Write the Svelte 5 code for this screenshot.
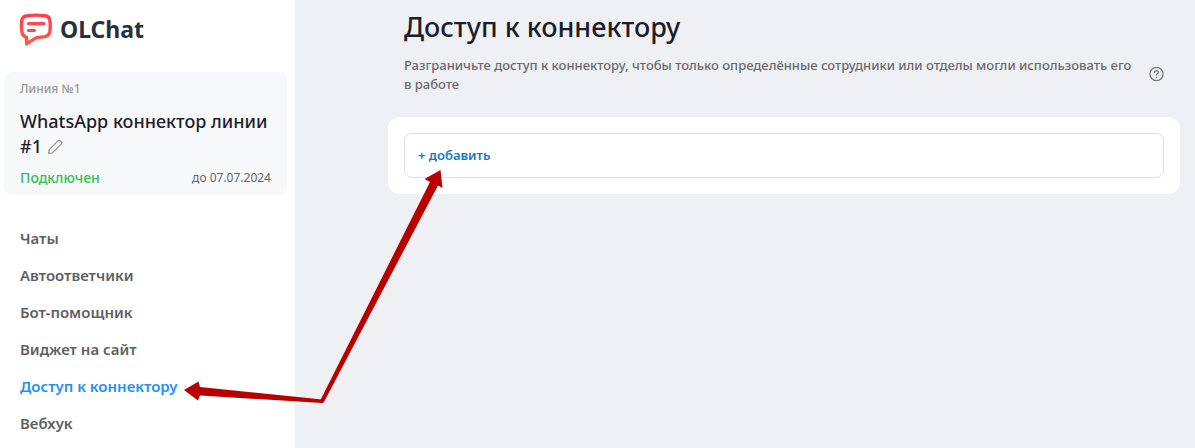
<script>
  const items = [
    'Чаты',
    'Автоответчики',
    'Бот-помощник',
    'Виджет на сайт',
    'Доступ к коннектору',
    'Вебхук'
  ];
  let active = $state('Доступ к коннектору');
</script>

<div class="app">
  <aside>
    <a class="brand" href="#home">
      <svg width="34" height="34" viewBox="0 0 34 34" fill="none" aria-hidden="true">
        <defs>
          <linearGradient id="brand-fill" x1="0" y1="0" x2="0" y2="1">
            <stop offset="0" stop-color="#ff3d4f" />
            <stop offset="1" stop-color="#ff5a46" />
          </linearGradient>
        </defs>
        <path
          d="M8.500 3.700Q17 2.500 26 3.700Q30.200 4.200 30.800 8Q31.700 13.800 30.800 20Q30.200 23.800 26 24.600L17.500 25.600L7.600 31.800V25.300Q3.400 24 2.900 20Q2 13.800 2.900 8Q3.600 4.200 8.500 3.700Z"
          stroke="url(#brand-fill)"
          stroke-width="3.400"
          stroke-linejoin="round"
        />
        <path d="M9.500 11.700H25M9.500 18.500H15.500" stroke="#ff4a4b" stroke-width="3.200" stroke-linecap="round" />
      </svg>
      <span>OLChat</span>
    </a>

    <section class="line">
      <div class="number">Линия №1</div>
      <h2>
        WhatsApp коннектор линии #1
        <button class="icon edit" aria-label="Изменить">
          <svg width="16" height="16" viewBox="0 0 16 16" fill="none" stroke="#999" stroke-width="1.3" stroke-linejoin="round">
            <path d="M1.500 14.500L2.200 10.600L10.900 1.900Q12.300.8 13.800 2.200Q15.200 3.700 14.100 5.100L5.400 13.800Z" />
          </svg>
        </button>
      </h2>
      <div class="status">
        <span class="on">Подключен</span>
        <span class="until">до 07.07.2024</span>
      </div>
    </section>

    <nav>
      {#each items as item}
        <a href="#section" class:active={item === active} onclick={() => (active = item)}>{item}</a>
      {/each}
    </nav>
  </aside>

  <main>
    <header>
      <h1>Доступ к коннектору</h1>
      <div class="intro">
        <p>
          Разграничьте доступ к коннектору, чтобы только определённые сотрудники или отделы могли использовать его в работе
        </p>
        <button class="icon" aria-label="Справка">
          <svg width="16" height="16" viewBox="0 0 16 16" fill="none" stroke="#777" stroke-width="1.3" stroke-linecap="round">
            <circle cx="8.500" cy="7" r="6.600" />
            <path d="M6.500 5.300Q6.700 3.600 8.500 3.600Q10.500 3.700 10.500 5.300Q10.400 6.300 9.300 6.800Q8.500 7.200 8.500 8.100" />
            <path d="M8.500 10.300V10.400" stroke-width="1.500" />
          </svg>
        </button>
      </div>
    </header>
    <section class="card">
      <div class="field">
        <button class="add">+ добавить</button>
      </div>
    </section>
  </main>

  <svg class="pointer" width="1195" height="448" viewBox="0 0 1195 448" fill="#b80000" aria-hidden="true">
    <path d="M184 390L198.500 381.500L200 387L322 399.500L324 402.500L322 403L200 395.500L198 400.500Z" />
    <path d="M440.500 170L442.500 188L438 185.500L324.500 401L322 403L320.500 400L430 182L424.500 179Z" />
  </svg>
</div>

<style>
  :global(body) {
    margin: 0;
    background: #eff0f4;
  }
  .app {
    position: relative;
    display: flex;
    min-height: 100vh;
    overflow: hidden;
    font-family: 'Noto Sans', sans-serif;
    color: #1d1d2b;
  }
  aside {
    box-sizing: border-box;
    flex: 0 0 295px;
    padding: 12px 8px 0 4px;
    background: #fff;
  }
  a {
    text-decoration: none;
  }
  button {
    border: 0;
    padding: 0;
    background: none;
    font: inherit;
    cursor: pointer;
  }
  .icon {
    display: inline-flex;
  }
  .brand {
    display: flex;
    align-items: center;
    gap: 7px;
    padding-left: 15px;
    height: 34px;
    color: #24323d;
    font-size: 23px;
    line-height: 30px;
    font-weight: 700;
  }
  .line {
    margin-top: 26px;
    padding: 8px 16px 7px;
    border-radius: 8px;
    background: #f7f8fa;
  }
  .number {
    color: #999;
    font-size: 12px;
    line-height: 18px;
    font-weight: 500;
  }
  h2 {
    margin: 11px 0 0;
    font-size: 18px;
    line-height: 25px;
    font-weight: 500;
  }
  .edit {
    vertical-align: -2px;
  }
  .status {
    display: flex;
    justify-content: space-between;
    align-items: center;
    margin-top: 9px;
    line-height: 20px;
  }
  .on {
    color: #34bd5c;
    font-size: 14px;
    font-weight: 500;
  }
  .until {
    color: #666;
    font-size: 12px;
  }
  nav {
    display: flex;
    flex-direction: column;
    margin-top: 25px;
  }
  nav a {
    padding: 0 16px;
    color: #5f5f5f;
    font-size: 15px;
    line-height: 37px;
    font-weight: 600;
  }
  nav .active {
    color: #2490f5;
  }
  main {
    flex: 1;
    min-width: 0;
    padding: 8px 15px 0 93px;
  }
  header {
    padding: 0 16px;
  }
  h1 {
    margin: 0;
    font-size: 27px;
    line-height: 38px;
    font-weight: 500;
  }
  .intro {
    display: flex;
    align-items: center;
    gap: 16px;
    margin-top: 10px;
  }
  p {
    flex: 1;
    margin: 0;
    color: #6a6a6c;
    font-size: 13px;
    line-height: 19px;
    font-weight: 500;
  }
  .card {
    margin-top: 23px;
    padding: 16px;
    border-radius: 12px;
    background: #fff;
  }
  .field {
    padding: 12px 13px;
    border: 1px solid #dfe0e3;
    border-radius: 8px;
  }
  .add {
    display: block;
    color: #1278cf;
    font-size: 13px;
    line-height: 19px;
    font-weight: 600;
  }
  .pointer {
    position: absolute;
    top: 0;
    left: 0;
    pointer-events: none;
  }
</style>
